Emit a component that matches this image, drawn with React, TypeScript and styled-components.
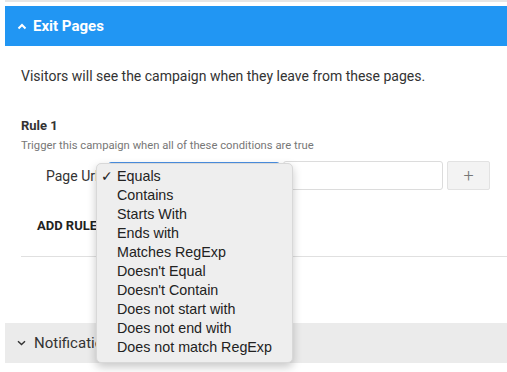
import styled, { createGlobalStyle } from "styled-components";

const GlobalStyle = createGlobalStyle`
	html, body {
		margin: 0;
		padding: 0;
		background: #ffffff;
	}
	body {
		font-family: Roboto, "Liberation Sans", sans-serif;
		color: #333333;
		overflow: hidden;
	}
`;

const operators = [
	"Equals",
	"Contains",
	"Starts With",
	"Ends with",
	"Matches RegExp",
	"Doesn't Equal",
	"Doesn't Contain",
	"Does not start with",
	"Does not end with",
	"Does not match RegExp",
];

const ChevronUp = () => (
	<svg width="10" height="7" viewBox="0 0 10 7">
		<path d="M1.5 5.5 L5 2 L8.5 5.5" fill="none" stroke="currentColor" strokeWidth="2" />
	</svg>
);

const ChevronDown = () => (
	<svg width="9" height="6" viewBox="0 0 9 6">
		<path d="M1 1.2 L4.5 4.6 L8 1.2" fill="none" stroke="currentColor" strokeWidth="1.4" />
	</svg>
);

export default function App () {
	return (
		<>
			<GlobalStyle />
			<Page>
				<PrevPanel />

				<SectionHeader $open>
					<ChevronUp />
					<span>Exit Pages</span>
				</SectionHeader>

				<SectionBody>
					<Description>Visitors will see the campaign when they leave from these pages.</Description>

					<RuleTitle>Rule 1</RuleTitle>
					<RuleHint>Trigger this campaign when all of these conditions are true</RuleHint>

					<ConditionRow>
						<FieldLabel>Page Url</FieldLabel>
						<SelectWrap>
							<SelectBox />
							<Menu>
								{operators.map((op, key) => (
									<MenuItem key={key}>
										<Check>{key === 0 ? "✓" : ""}</Check>
										{op}
									</MenuItem>
								))}
							</Menu>
						</SelectWrap>
						<ValueInput />
						<AddButton>+</AddButton>
					</ConditionRow>

					<AddRule>ADD RULE</AddRule>
					<Divider />
				</SectionBody>

				<SectionHeader>
					<ChevronDown />
					<span>Notifications</span>
				</SectionHeader>
			</Page>
		</>
	);
};

const Page = styled.div`
	width: 507px;
	height: 372px;
	padding-left: 5px;
	box-sizing: border-box;
	position: relative;
`;

const PrevPanel = styled.div`
	height: 2px;
	background: #e6e6e6;
	margin-bottom: 4px;
`;

const SectionHeader = styled.div<{ $open?: boolean }>`
	height: 40px;
	display: flex;
	align-items: center;
	gap: ${props => props.$open ? "6px" : "8px"};
	padding-left: 12px;
	background: ${props => props.$open ? "#2196f3" : "#ebebeb"};
	color: ${props => props.$open ? "#ffffff" : "#333333"};
	font-size: 15px;
	font-weight: ${props => props.$open ? 700 : 400};
`;

const SectionBody = styled.div`
	padding: 20px 0 0 16px;
	height: 277px;
	box-sizing: border-box;
`;

const Description = styled.p`
	margin: 0;
	font-size: 14px;
	line-height: 20px;
	color: #333333;
`;

const RuleTitle = styled.h3`
	margin: 31px 0 0;
	font-size: 13px;
	line-height: 18px;
	font-weight: 700;
	color: #333333;
`;

const RuleHint = styled.p`
	margin: 3px 0 0;
	font-size: 11.25px;
	line-height: 15px;
	color: #777777;
`;

const ConditionRow = styled.div`
	display: flex;
	align-items: center;
	margin-top: 8px;
	padding-left: 25px;
	height: 29px;
`;

const FieldLabel = styled.span`
	width: 62px;
	font-size: 14px;
	color: #333333;
`;

const SelectWrap = styled.div`
	position: relative;
	width: 172px;
	height: 29px;
	margin-right: 3px;
`;

const SelectBox = styled.div`
	height: 100%;
	box-sizing: border-box;
	border: 1px solid #4a90e2;
	border-radius: 3px;
	margin-top: 1px;
`;

const Menu = styled.ul`
	position: absolute;
	left: -12px;
	top: 2px;
	width: 197px;
	margin: 0;
	padding: 2px 0 6px;
	list-style: none;
	background: #eeeeee;
	border: 1px solid #d8d8d8;
	border-radius: 5px;
	box-shadow: 0 4px 10px rgba(0, 0, 0, 0.22);
	box-sizing: border-box;
	z-index: 10;
`;

const MenuItem = styled.li`
	display: flex;
	align-items: center;
	height: 19px;
	font-family: "Liberation Sans", Arial, sans-serif;
	font-size: 14.3px;
	color: #222222;
`;

const Check = styled.span`
	width: 20px;
	padding-left: 4px;
	box-sizing: border-box;
	font-family: "DejaVu Sans", sans-serif;
	font-size: 14px;
	color: #222222;
`;

const ValueInput = styled.div`
	width: 160px;
	height: 29px;
	box-sizing: border-box;
	border: 1px solid #dcdcdc;
	border-radius: 3px;
	margin-right: 4px;
`;

const AddButton = styled.div`
	width: 43px;
	height: 29px;
	box-sizing: border-box;
	border: 1px solid #e2e2e2;
	border-radius: 2px;
	background: #f3f3f3;
	color: #777777;
	font-size: 18px;
	font-weight: 300;
	display: flex;
	align-items: center;
	justify-content: center;
`;

const AddRule = styled.div`
	margin: 27px 0 0 16px;
	font-size: 13px;
	line-height: 18px;
	font-weight: 700;
	color: #222222;
`;

const Divider = styled.hr`
	margin: 21px 0 0;
	border: none;
	border-top: 1px solid #e0e0e0;
`;
